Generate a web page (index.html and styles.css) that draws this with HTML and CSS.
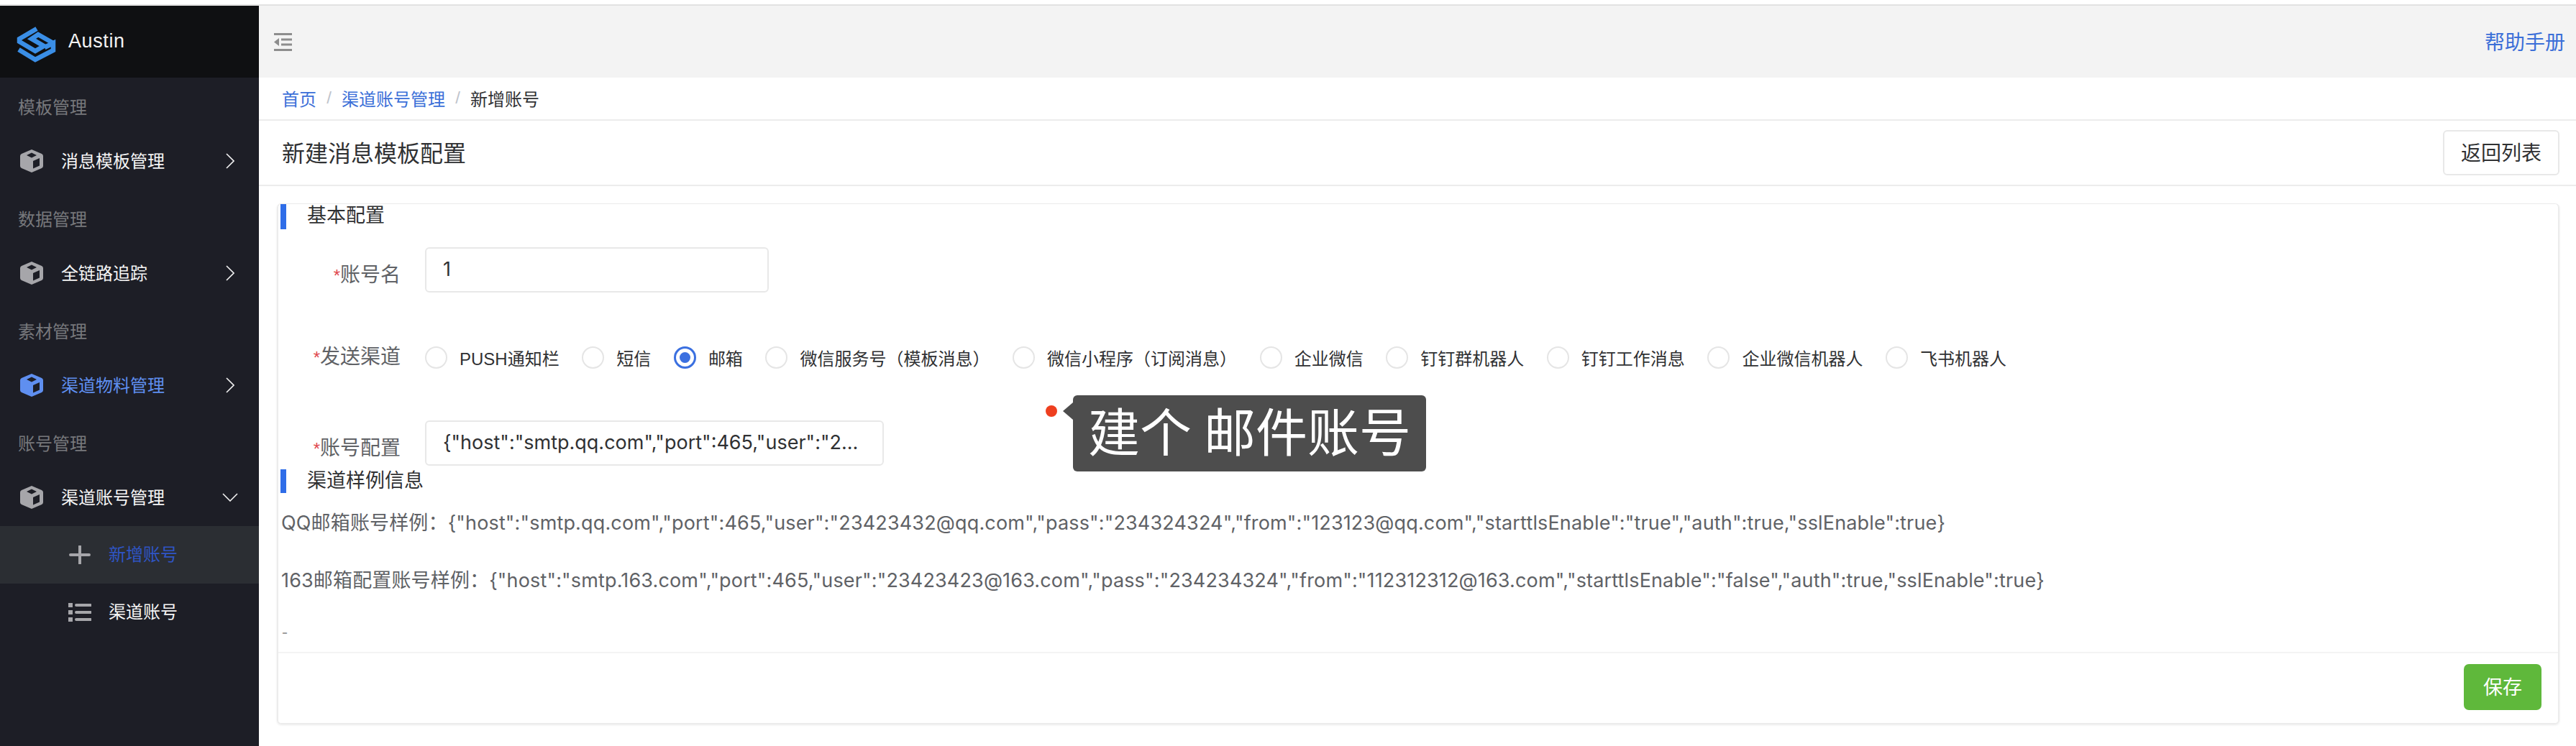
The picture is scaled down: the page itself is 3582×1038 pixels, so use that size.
FILE: index.html
```html
<!DOCTYPE html>
<html lang="zh-CN">
<head>
<meta charset="utf-8">
<title>新增账号</title>
<link rel="stylesheet" href="styles.css">
</head>
<body>
<div class="top-strip"></div>
<div class="app">
  <aside class="sidebar">
    <div class="brand">
      <svg class="logo" viewBox="0 0 70 70" fill="none" stroke="#3a8ee6" stroke-width="6.500" stroke-linejoin="miter">
        <path d="M36 15 L12 29 V33 L34 46 L46 39 L29 29 L38 23 L59 35"/>
        <path d="M11 44 L34 58 L59 45 V35 L47 41"/>
      </svg>
      <span class="brand-name">Austin</span>
    </div>
    <nav class="menu">
      <div class="group">
        <div class="group-label">模板管理</div>
        <div class="item">
          <svg class="cube" viewBox="0 0 32 32"><path class="cube-body" d="M16 0 L30 6 Q32 7 32 9 V23 Q32 25 30 26 L16 32 L2 26 Q0 25 0 23 V9 Q0 7 2 6 Z"/><path class="cube-hole" d="M16 4.500 L23 8 L16 11.500 L9 8 Z M18 16 L27 12 V22.500 L18 26.500 Z"/></svg>
          <span class="item-text">消息模板管理</span>
          <svg class="chev" viewBox="0 0 12 22"><path d="M1 1 L11 11 L1 21"/></svg>
        </div>
      </div>
      <div class="group">
        <div class="group-label">数据管理</div>
        <div class="item">
          <svg class="cube" viewBox="0 0 32 32"><path class="cube-body" d="M16 0 L30 6 Q32 7 32 9 V23 Q32 25 30 26 L16 32 L2 26 Q0 25 0 23 V9 Q0 7 2 6 Z"/><path class="cube-hole" d="M16 4.500 L23 8 L16 11.500 L9 8 Z M18 16 L27 12 V22.500 L18 26.500 Z"/></svg>
          <span class="item-text">全链路追踪</span>
          <svg class="chev" viewBox="0 0 12 22"><path d="M1 1 L11 11 L1 21"/></svg>
        </div>
      </div>
      <div class="group">
        <div class="group-label">素材管理</div>
        <div class="item item-active">
          <svg class="cube" viewBox="0 0 32 32"><path class="cube-body" d="M16 0 L30 6 Q32 7 32 9 V23 Q32 25 30 26 L16 32 L2 26 Q0 25 0 23 V9 Q0 7 2 6 Z"/><path class="cube-hole" d="M16 4.500 L23 8 L16 11.500 L9 8 Z M18 16 L27 12 V22.500 L18 26.500 Z"/></svg>
          <span class="item-text">渠道物料管理</span>
          <svg class="chev" viewBox="0 0 12 22"><path d="M1 1 L11 11 L1 21"/></svg>
        </div>
      </div>
      <div class="group">
        <div class="group-label">账号管理</div>
        <div class="item">
          <svg class="cube" viewBox="0 0 32 32"><path class="cube-body" d="M16 0 L30 6 Q32 7 32 9 V23 Q32 25 30 26 L16 32 L2 26 Q0 25 0 23 V9 Q0 7 2 6 Z"/><path class="cube-hole" d="M16 4.500 L23 8 L16 11.500 L9 8 Z M18 16 L27 12 V22.500 L18 26.500 Z"/></svg>
          <span class="item-text">渠道账号管理</span>
          <svg class="chev chev-down" viewBox="0 0 22 12"><path d="M1 1 L11 11 L21 1"/></svg>
        </div>
        <div class="submenu">
          <div class="sub-item sub-active">
            <svg class="sub-icon" viewBox="0 0 32 26"><path class="sub-line" d="M3 13 H29 M16 1 V25"/></svg>
            <span class="sub-text">新增账号</span>
          </div>
          <div class="sub-item">
            <svg class="sub-icon" viewBox="0 0 32 26"><path class="sub-line" d="M11 3 H31 M11 13 H31 M11 23 H31"/><path class="sub-dots" d="M0 0 H6 V6 H0 Z M0 10 H6 V16 H0 Z M0 20 H6 V26 H0 Z"/></svg>
            <span class="sub-text">渠道账号</span>
          </div>
        </div>
      </div>
    </nav>
  </aside>
  <main class="main">
    <header class="navbar">
      <svg class="collapse" viewBox="0 0 25 25"><path d="M0 1.500 H25 M10 9 H25 M10 16 H25 M0 23.500 H25"/><path class="collapse-arrow" d="M0 12.500 L7 7 V18 Z"/></svg>
      <a class="help">帮助手册</a>
    </header>
    <div class="breadcrumb">
      <a class="crumb-link">首页</a><span class="crumb-sep">/</span>
      <a class="crumb-link">渠道账号管理</a><span class="crumb-sep">/</span>
      <span class="crumb-current">新增账号</span>
    </div>
    <div class="titlebar">
      <h1 class="page-title">新建消息模板配置</h1>
      <button class="btn-back">返回列表</button>
    </div>
    <section class="card">
      <h2 class="section-title section-first">基本配置</h2>
      <div class="form-row row-name">
        <label class="form-label"><span class="req">*</span>账号名</label>
        <input class="text-input input-name" value="1">
      </div>
      <div class="form-row row-radio">
        <label class="form-label"><span class="req">*</span>发送渠道</label>
        <div class="radios">
          <span class="radio"><i class="dot"></i>PUSH通知栏</span>
          <span class="radio"><i class="dot"></i>短信</span>
          <span class="radio"><i class="dot dot-on"></i>邮箱</span>
          <span class="radio"><i class="dot"></i>微信服务号（模板消息）</span>
          <span class="radio"><i class="dot"></i>微信小程序（订阅消息）</span>
          <span class="radio"><i class="dot"></i>企业微信</span>
          <span class="radio"><i class="dot"></i>钉钉群机器人</span>
          <span class="radio"><i class="dot"></i>钉钉工作消息</span>
          <span class="radio"><i class="dot"></i>企业微信机器人</span>
          <span class="radio"><i class="dot"></i>飞书机器人</span>
        </div>
      </div>
      <div class="form-row row-config">
        <label class="form-label"><span class="req">*</span>账号配置</label>
        <input class="text-input input-config" value='{"host":"smtp.qq.com","port":465,"user":"23423432@qq.com","pass":"234324324"}'>
      </div>
      <h2 class="section-title">渠道样例信息</h2>
      <p class="sample">QQ邮箱账号样例：{"host":"smtp.qq.com","port":465,"user":"23423432@qq.com","pass":"234324324","from":"123123@qq.com","starttlsEnable":"true","auth":true,"sslEnable":true}</p>
      <p class="sample">163邮箱配置账号样例：{"host":"smtp.163.com","port":465,"user":"23423423@163.com","pass":"234234324","from":"112312312@163.com","starttlsEnable":"false","auth":true,"sslEnable":true}</p>
      <p class="dash">-</p>
      <footer class="card-footer"><button class="btn-save">保存</button></footer>
    </section>
  </main>
</div>
<div class="callout">
  <span class="callout-dot"></span>
  <span class="callout-box">建个 邮件账号</span>
</div>
</body>
</html>
```
FILE: styles.css
```css
* { box-sizing: border-box; }
html, body { margin: 0; padding: 0; }
body {
  height: 1038px;
  overflow: hidden;
  background: #fff;
  color: #303133;
  font-family: "Liberation Sans", "Noto Sans CJK SC", sans-serif;
  font-size: 24px;
}
.top-strip { height: 8px; background: #fff; border-bottom: 2px solid #e2e2e2; }
.app { display: flex; height: 1030px; }

/* sidebar */
.sidebar { width: 360px; flex: none; background: #1d1e26; display: flex; flex-direction: column; }
.brand { height: 100px; background: #0f1012; display: flex; align-items: center; padding-left: 15px; }
.logo { width: 70px; height: 70px; flex: none; margin-top: 4px; }
.brand-name { margin-left: 10px; color: #f2f2f2; font-size: 27px; letter-spacing: 0.6px; padding-bottom: 2px; }
.menu { padding-top: 5px; }
.group { margin-bottom: 8px; }
.group-label { height: 74px; line-height: 74px; padding-left: 25px; color: #77787c; font-size: 24px; }
.item { height: 74px; display: flex; align-items: center; padding-left: 28px; color: #f5f5f5; }
.cube { width: 32px; height: 32px; flex: none; }
.cube-body { fill: #a6a6aa; fill-rule: evenodd; }
.cube-hole { fill: #1d1e26; }
.item-text { margin-left: 25px; font-size: 24px; padding-bottom: 3px; }
.chev { width: 12px; height: 22px; margin-left: auto; margin-right: 34px; flex: none; fill: none; stroke: #f0f0f0; stroke-width: 1.6; }
.chev-down { width: 22px; height: 12px; margin-right: 29px; }
.item-active { color: #5f8ff0; }
.item-active .cube-body { fill: #5f8ff0; }
.submenu { margin-top: 3px; }
.sub-item { height: 80px; display: flex; align-items: center; padding-left: 95px; color: #f5f5f5; }
.sub-active { background: #2b2e33; color: #2f55c5; }
.sub-icon { width: 32px; height: 26px; flex: none; }
.sub-line { fill: none; stroke: #a6a6aa; stroke-width: 4; stroke-linecap: round; }
.sub-dots { fill: #a6a6aa; }
.sub-text { margin-left: 24px; padding-bottom: 5px; }

/* main */
.main { flex: 1; min-width: 0; display: flex; flex-direction: column; }
.navbar { height: 100px; background: #f3f3f3; display: flex; align-items: center; justify-content: space-between; padding: 0 15px 0 21px; }
.collapse { width: 25px; height: 25px; fill: none; stroke: #8d8d8d; stroke-width: 3; }
.collapse-arrow { fill: #8d8d8d; stroke: none; }
.help { color: #3b6fd8; font-size: 28px; padding-bottom: 3px; }
.breadcrumb { height: 60px; border-bottom: 2px solid #ececec; display: flex; align-items: center; padding-left: 32px; font-size: 24px; padding-bottom: 2px; }
.crumb-link { color: #3b6fd8; }
.crumb-sep { color: #c0c4cc; margin: 0 12px; width: 11px; text-align: center; }
.crumb-current { color: #303133; }
.titlebar { height: 91px; border-bottom: 2px solid #ececec; display: flex; align-items: center; justify-content: space-between; padding: 0 23px 0 32px; }
.page-title { margin: 0 0 4px; font-size: 32px; font-weight: 400; color: #303133; }
.btn-back { width: 162px; height: 63px; background: #fff; border: 2px solid #e8e8e8; border-radius: 6px; font: inherit; font-size: 28px; color: #303133; padding: 0 0 3px; }

.card { margin: 24px 23px 0 25px; height: 725px; border: 2px solid #ececec; border-top-width: 1px; border-radius: 6px; box-shadow: 0 1px 3px rgba(0,0,0,.08); display: flex; flex-direction: column; }
.section-title { margin: 5px 0 0 3px; height: 33px; line-height: 33px; border-left: 8px solid #2f6de8; padding-left: 29px; font-size: 27px; font-weight: 400; color: #303133; }
.section-first { margin-top: 0; height: 35px; }
.form-row { display: flex; align-items: flex-start; height: 63px; }
.form-label { width: 170px; margin-right: 34px; padding-top: 8px; line-height: 62px; text-align: right; font-size: 28px; color: #606266; flex: none; }
.req { color: #e0484f; font-size: 24px; }
.row-name { margin-top: 25px; }
.row-radio { margin-top: 59px; }
.row-radio .form-label { padding-top: 0; }
.row-config { margin-top: 56px; }
.text-input { height: 63px; border: 2px solid #e8e8e8; border-radius: 6px; padding: 0 23px 2px; font-family: Inter, "Noto Sans CJK SC", sans-serif; font-size: 27px; color: #303133; outline: none; text-overflow: ellipsis; background: #fff; }
.input-name { width: 478px; }
.input-config { width: 638px; }
.radios { display: flex; align-items: center; height: 62px; gap: 31.600px; white-space: nowrap; }
.radio { display: flex; align-items: center; gap: 17px; font-size: 24px; color: #303133; }
.dot { width: 31px; height: 31px; border: 2px solid #e5e5e5; border-radius: 50%; flex: none; display: block; }
.dot-on { border: 3px solid #3b70e0; position: relative; }
.dot-on::after { content: ""; position: absolute; inset: 5px; border-radius: 50%; background: #3b70e0; }
.sample { margin: 0 0 0 4px; height: 80px; line-height: 80px; font-family: Inter, "Noto Sans CJK SC", sans-serif; font-size: 27px; letter-spacing: 0.15px; color: #606266; white-space: nowrap; }
.sample:first-of-type { margin-top: 2px; }
.dash { margin: 0 0 0 5px; height: 59px; line-height: 62px; font-size: 24px; color: #9a9a9a; }
.card-footer { border-top: 2px solid #f4f4f4; flex: 1; display: flex; justify-content: flex-end; align-items: flex-start; padding: 15px 23px 0 0; }
.btn-save { width: 108px; height: 64px; background: #5fb83b; border: 0; border-radius: 7px; color: #fff; font: inherit; font-size: 27px; padding: 0 0 3px; }

/* annotation overlay */
.callout { position: absolute; left: 1454px; top: 550px; display: flex; align-items: flex-start; }
.callout-dot { width: 16px; height: 16px; margin-top: 14px; background: #ee3f1f; border-radius: 50%; flex: none; }
.callout-box { position: relative; margin-left: 22px; width: 491px; height: 106px; line-height: 106px; background: #4d4d4d; border-radius: 6px; color: #fff; font-size: 72px; word-spacing: -3px; white-space: nowrap; padding-left: 21px; }
.callout-box::before { content: ""; position: absolute; left: -14px; top: 10px; border: 12px solid transparent; border-left: 0; border-right: 14px solid #4d4d4d; }
```
